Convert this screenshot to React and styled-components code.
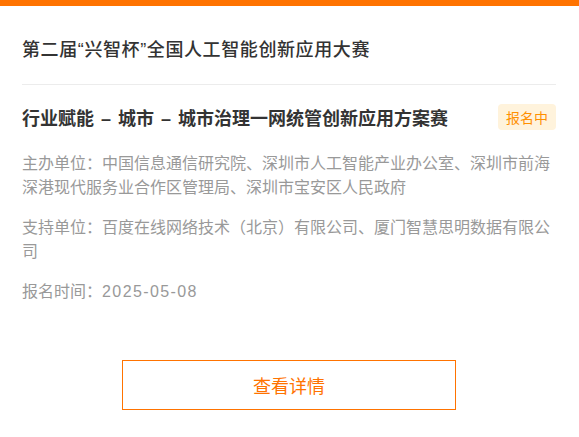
import React from 'react';
import styled, { createGlobalStyle } from 'styled-components';

const GlobalStyle = createGlobalStyle`
  body {
    margin: 0;
    background: #fff;
    font-family: 'Liberation Sans', 'Noto Sans CJK SC', sans-serif;
  }
`;

const TopBar = styled.div`
  height: 6px;
  background-color: #ff7300;
`;

const Card = styled.div`
  display: flex;
  flex-direction: column;
  padding: 0 23px 0 22px;
`;

const CompTitle = styled.div`
  padding: 32px 0 22px;
  font-size: 18px;
  line-height: 24px;
  font-weight: 500;
  letter-spacing: 0.6px;
  color: #333;
  border-bottom: 1px solid #ececec;
`;

const TrackRow = styled.div`
  display: flex;
  justify-content: space-between;
  align-items: center;
  margin-top: 19px;
  height: 26px;

  .track {
    font-size: 18px;
    font-weight: 700;
    color: #333;
    word-spacing: 2px;
  }
`;

const Badge = styled.span`
  display: inline-flex;
  align-items: center;
  justify-content: center;
  width: 58px;
  height: 26px;
  border-radius: 4px;
  background-color: #fff3dc;
  color: #ff9000;
  font-size: 14px;
`;

const InfoList = styled.div`
  display: flex;
  flex-direction: column;
  gap: 16px;
  margin-top: 22px;
`;

const InfoItem = styled.p`
  margin: 0;
  font-size: 16px;
  line-height: 24px;
  color: #999;
`;

const InfoValue = styled.span`
  letter-spacing: ${(props) => (props.$numeric ? '1.4px' : 'normal')};
`;

const DetailButton = styled.button`
  align-self: center;
  width: 334px;
  height: 50px;
  margin-top: 56px;
  border: 1px solid #ff7300;
  background: #fff;
  color: #ff7300;
  font-family: inherit;
  font-size: 18px;
  cursor: pointer;
`;

const infos = [
  { label: '主办单位', value: '中国信息通信研究院、深圳市人工智能产业办公室、深圳市前海深港现代服务业合作区管理局、深圳市宝安区人民政府' },
  { label: '支持单位', value: '百度在线网络技术（北京）有限公司、厦门智慧思明数据有限公司' },
  { label: '报名时间', value: '2025-05-08', numeric: true },
];

const App = () => {
  return (
    <>
      <GlobalStyle />
      <TopBar />
      <Card>
        <CompTitle>第二届“兴智杯”全国人工智能创新应用大赛</CompTitle>
        <TrackRow>
          <div className="track">行业赋能 – 城市 – 城市治理一网统管创新应用方案赛</div>
          <Badge>报名中</Badge>
        </TrackRow>
        <InfoList>
          {infos.map((item) => (
            <InfoItem key={item.label}>
              {item.label}：<InfoValue $numeric={item.numeric}>{item.value}</InfoValue>
            </InfoItem>
          ))}
        </InfoList>
        <DetailButton>查看详情</DetailButton>
      </Card>
    </>
  );
};

export default App;
